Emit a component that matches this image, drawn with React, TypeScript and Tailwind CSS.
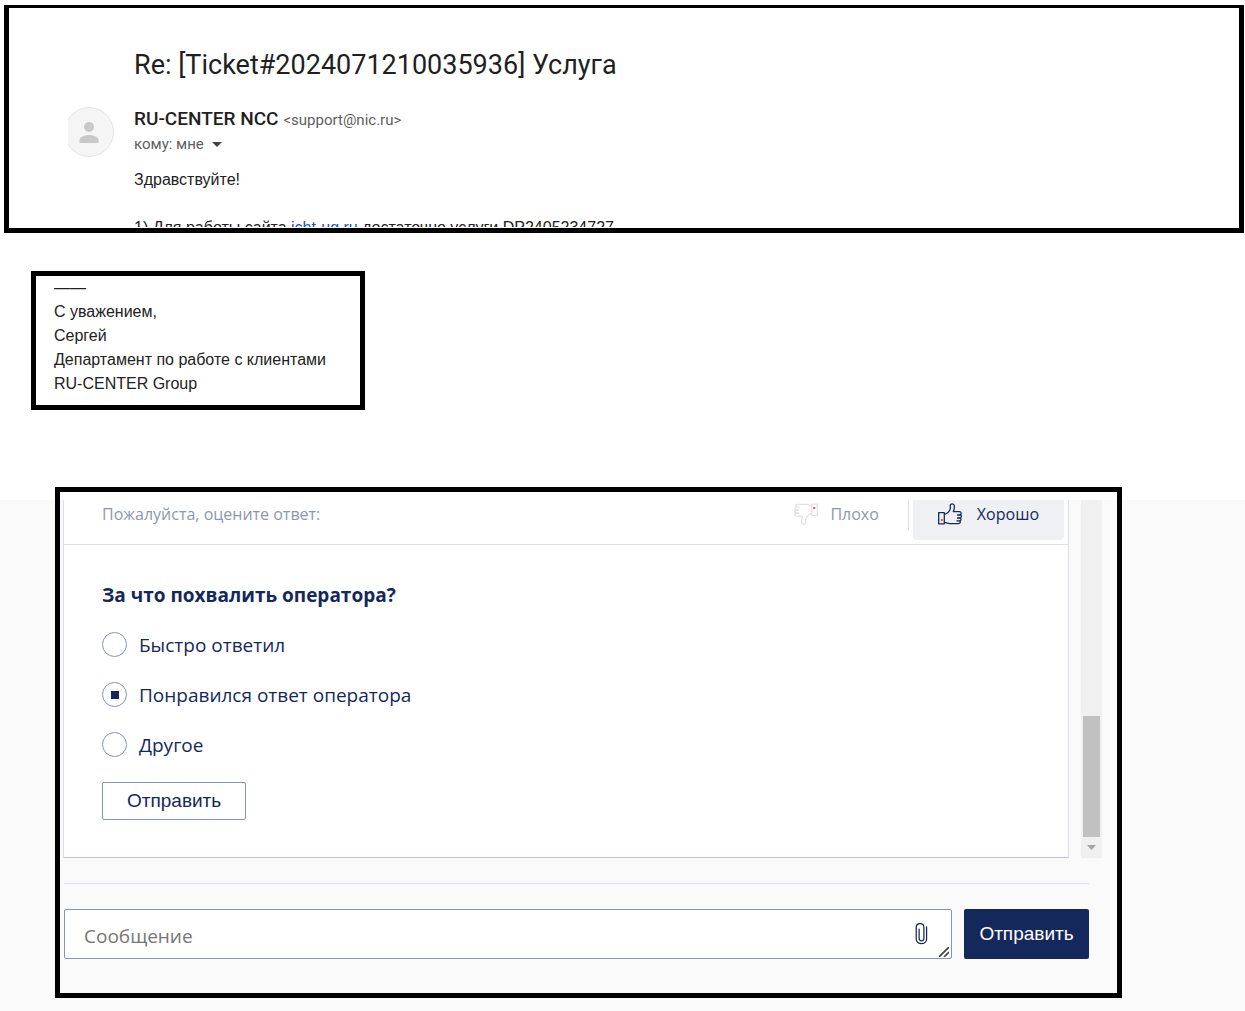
import { useState } from 'react';

const REASONS = [
  { id: 'fast', label: 'Быстро ответил' },
  { id: 'liked', label: 'Понравился ответ оператора' },
  { id: 'other', label: 'Другое' },
];

const SIGNATURE = ['——', 'С уважением,', 'Сергей', 'Департамент по работе с клиентами', 'RU-CENTER Group'];

function Avatar() {
  return (
    <svg width="46" height="50" viewBox="0 0 46 50" className="shrink-0" aria-hidden="true">
      <circle cx="21" cy="25" r="24.5" fill="#f5f5f5" stroke="#e4e4e4" />
      <circle cx="21" cy="20" r="5" fill="#c9c9c9" />
      <path d="M11.500 36v-3c0-3.500 6-5 9.500-5s9.500 1.500 9.500 5v3z" fill="#c9c9c9" />
    </svg>
  );
}

function Thumb({ className, cuff }: { className: string; cuff: string }) {
  return (
    <svg width="25" height="22" viewBox="0 0 25 22" fill="none" stroke="currentColor" strokeWidth="1.3" strokeLinejoin="round" className={className} aria-hidden="true">
      <path d="M.7 9.700h5.600v11.100H.700z" />
      <path d="M6.300 11.500c3-1 5.500-3.300 6-6V2.500c0-2.300 3.700-2.300 4 .2.200 2-.3 4.300-1 6h6c2.300 0 2.600 3 .5 3.300 2.200.2 2 3 0 3.100 1.800.2 1.600 2.600-.300 2.800 1.300.4 1 2.700-1 2.700h-9c-2 0-3.500-1.200-5.200-1.200" />
      <path d="M19 12h3M19 15h3M18.500 17.900h3" />
      <rect x="2.800" y="16" width="2" height="2" fill={cuff} stroke="none" />
    </svg>
  );
}

function MailHeader() {
  return (
    <section className="ml-1 mr-px overflow-hidden border-x-5 border-t-3 border-b-5 border-black bg-white pb-px pl-[59px] font-['Liberation_Sans',sans-serif] text-[#222]">
      <h1 className="pt-[41px] pl-[66px] font-['Roboto',sans-serif] text-[27px] leading-8 text-[#1f1f1f]">
        Re: [Ticket#2024071210035936] Услуга
      </h1>
      <div className="mt-[26px] flex gap-5">
        <Avatar />
        <div className="min-w-0 font-['Roboto',sans-serif] text-[#5e5e5e]">
          <div className="flex items-baseline gap-[5px] leading-6">
            <span className="text-[19px] font-medium text-[#1f1f1f]">RU-CENTER NCC</span>
            <span className="text-[15px]">&lt;support@nic.ru&gt;</span>
          </div>
          <button type="button" className="flex items-center gap-2 text-[15px] leading-6">
            кому: мне
            <svg width="10" height="5" viewBox="0 0 10 5" aria-hidden="true">
              <path d="M0 0h10L5 5z" fill="#444" />
            </svg>
          </button>
        </div>
      </div>
      <div className="pl-[66px] text-[16px] leading-6">
        <p className="mt-[11px]">Здравствуйте!</p>
        <p className="mt-6 h-[11px] overflow-hidden">
          1) Для работы сайта <a href="#site" className="text-[#1155cc]">icht-ug.ru</a> достаточно услуги DP2405234727
        </p>
      </div>
    </section>
  );
}

function RatingCard() {
  const [reason, setReason] = useState('liked');
  const [good, setGood] = useState(true);

  return (
    <div className="min-w-0 flex-1 border border-t-0 border-[#dcdfe9] border-b-[#bfc4d3] bg-white text-[#14285c]">
      <div className="flex items-start border-b border-[#dcdfe9] pl-[38px] pr-1 text-[16px]">
        <p className="flex-1 pb-4 leading-7 text-[#8b97b4]">Пожалуйста, оцените ответ:</p>
        <button type="button" onClick={() => setGood(false)} aria-pressed={!good} className="flex items-center gap-3 pr-[29px] leading-7 text-[#8b97b4]">
          <Thumb className="rotate-180 text-[#dfe1e8]" cuff="#e8503c" />
          Плохо
        </button>
        <span className="mr-1 h-[30px] w-px bg-[#dcdfe9]" />
        <button type="button" onClick={() => setGood(true)} aria-pressed={good} className="flex items-center gap-[14px] rounded-b-sm bg-[#eff0f4] px-[25px] pb-3 leading-7">
          <Thumb className="text-[#14285c]" cuff="#e8503c" />
          Хорошо
        </button>
      </div>

      <form className="px-[38px] pt-[38px] pb-[37px]" onSubmit={e => e.preventDefault()}>
        <fieldset>
          <legend className="text-[19px] font-bold leading-6">За что похвалить оператора?</legend>
          <div className="mt-[25px] flex flex-col gap-[25px]">
            {REASONS.map(r => (
              <label key={r.id} className="flex h-[25px] items-center gap-3 text-[19px] leading-[25px]">
                <input
                  type="radio"
                  name="reason"
                  checked={reason === r.id}
                  onChange={() => setReason(r.id)}
                  className="grid size-[25px] appearance-none place-content-center rounded-full border border-[#8993b2] bg-white before:block before:size-2 before:content-[''] checked:before:bg-[#14285c]"
                />
                <span className="pt-[2px]">{r.label}</span>
              </label>
            ))}
          </div>
        </fieldset>
        <button type="submit" className="mt-[25px] h-[38px] rounded-xs border border-[#8993b2] px-6 font-['Liberation_Sans',sans-serif] text-[19px]">
          Отправить
        </button>
      </form>
    </div>
  );
}

function ScrollTrack() {
  return (
    <div className="flex w-[21px] flex-col items-center justify-end bg-[#f0f0f0]" aria-hidden="true">
      <div className="h-[121px] w-[17px] bg-[#c1c1c1]" />
      <svg width="9" height="5" viewBox="0 0 9 5" className="my-2">
        <path d="M0 0h9L4.500 5z" fill="#a3a3a3" />
      </svg>
    </div>
  );
}

function MessageForm() {
  return (
    <form className="mt-[25px] flex gap-3" onSubmit={e => e.preventDefault()}>
      <div className="relative min-w-0 flex-1">
        <textarea
          aria-label="Сообщение"
          placeholder="Сообщение"
          className="block h-[50px] w-full resize-none overflow-hidden rounded-xs border border-[#8993b2] bg-white px-[19px] pt-3 pr-14 text-[19px] leading-7 text-[#14285c] placeholder:text-[#757575]"
        />
        <button type="button" aria-label="Прикрепить файл" className="absolute top-[13px] right-6 text-[#14285c]">
          <svg width="13" height="24" viewBox="0 0 13 25" fill="none" stroke="currentColor" strokeWidth="1.3" strokeLinecap="round">
            <path d="M11.800 5v13c0 6-10.800 6-10.800 0V5.500C1 .3 9 .3 9 5.500V17c0 3.500-5 3.500-5 0V7.500" />
          </svg>
        </button>
        <svg width="10" height="10" viewBox="0 0 10 10" className="pointer-events-none absolute right-[3px] bottom-[2px]" stroke="#444" strokeWidth="1.700" aria-hidden="true">
          <path d="M0 10L10 0M5 10l5-5" />
        </svg>
      </div>
      <button type="submit" className="w-[125px] rounded-xs bg-[#14285c] font-['Liberation_Sans',sans-serif] text-[19px] text-white">
        Отправить
      </button>
    </form>
  );
}

export default function App() {
  return (
    <div className="flex min-h-screen flex-col bg-white">
      <div className="pt-[5px] pb-[90px]">
        <MailHeader />
        <section className="mt-[38px] ml-[31px] w-fit border-5 border-black bg-white pr-[34px] pb-[9px] pl-[18px] font-['Liberation_Sans',sans-serif] text-[16px] leading-6 text-[#222]">
          {SIGNATURE.map(line => (
            <p key={line}>{line}</p>
          ))}
        </section>
      </div>

      <div className="flex-1 bg-[#fafafa] pb-[13px]">
        <section className="-mt-[13px] mr-[123px] ml-[55px] border-5 border-black bg-[#fafafa] pb-[34px] font-['Open_Sans',sans-serif]">
          <div className="h-2 bg-white" />
          <div className="flex gap-3 pr-[15px] pl-[3px]">
            <RatingCard />
            <ScrollTrack />
          </div>
          <div className="mt-[25px] mr-7 ml-1 border-t border-[#dfe1ec]">
            <MessageForm />
          </div>
        </section>
      </div>
    </div>
  );
}
